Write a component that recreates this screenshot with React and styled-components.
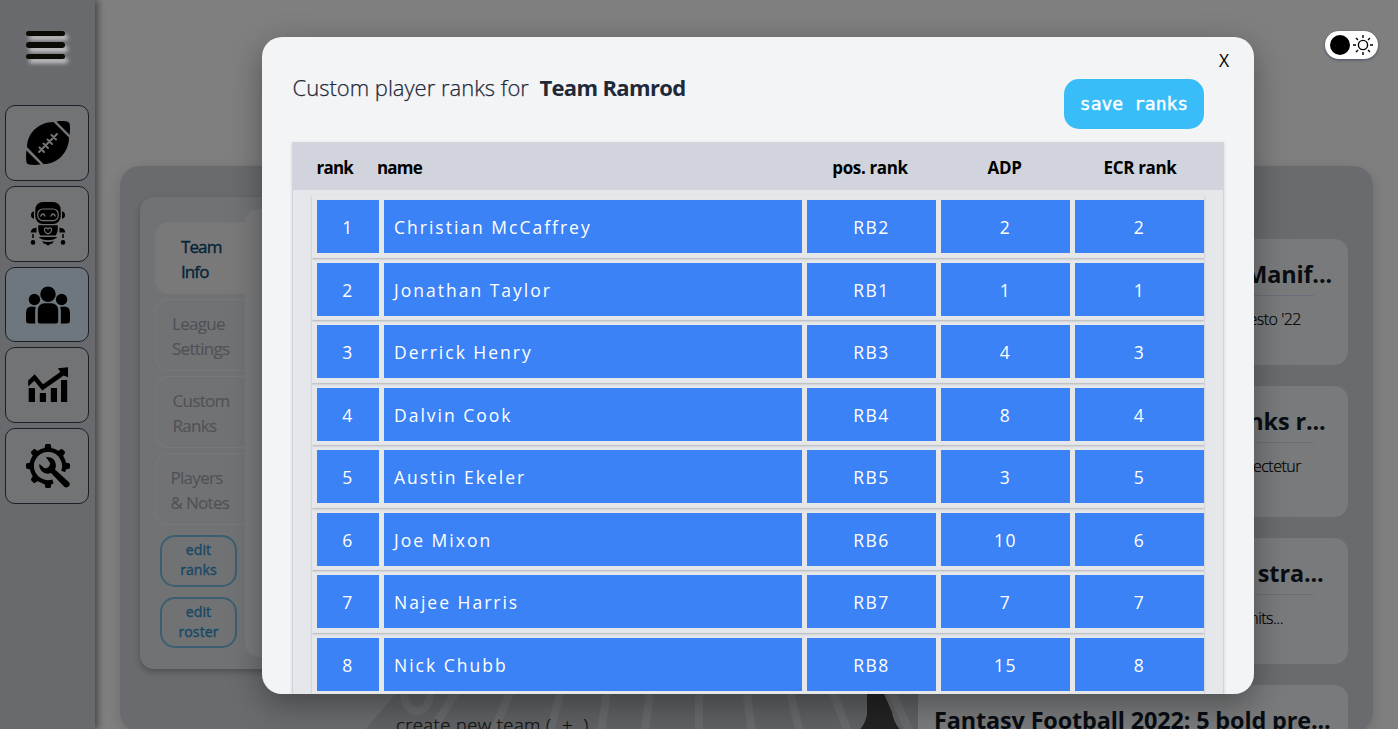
import React from "react";
import styled, { createGlobalStyle } from "styled-components";

const Global = createGlobalStyle`
  *, *::before, *::after { box-sizing: border-box; }
  html, body { margin: 0; height: 100%; overflow: hidden; }
  body { background: #fff; color: #000; font-family: "Open Sans", "Noto Sans", sans-serif; }
  button { font: inherit; color: inherit; margin: 0; padding: 0; border: 0; background: none; cursor: pointer; }
  h2, h3, p { margin: 0; font: inherit; }
`;

const Page = styled.div`
  position: relative;
  display: flex;
  width: 100%;
  height: 729px;
  overflow: hidden;
`;

const Sidebar = styled.nav`
  position: relative;
  flex: none;
  width: 95px;
  height: 100%;
  padding: 31px 6px 0 5px;
  background: #d3d5dc;
  box-shadow: 3px 0 7px rgba(0, 0, 0, 0.45);
`;

const MenuButton = styled.button`
  position: relative;
  z-index: 2;
  display: flex;
  flex-direction: column;
  gap: 6px;
  width: 38.5px;
  margin: 0 0 46.3px 21px;
`;

const MenuBar = styled.span`
  height: 5.3px;
  border-radius: 3px;
  background: #0b0a05;
  box-shadow: 3px 4px 4px rgba(255, 255, 255, 0.65);
`;

const NavList = styled.div`
  display: flex;
  flex-direction: column;
  gap: 5px;
`;

const NavButton = styled.button`
  display: flex;
  align-items: center;
  justify-content: center;
  height: 75.75px;
  border: 1px solid #363b50;
  border-radius: 10px;
  padding-left: 2px;
  background: ${(p) => (p.$active ? "#dceffd" : "#e5e6e8")};
`;

const Icon = styled.svg`
  display: block;
  width: 44px;
  height: 44px;
`;

const Main = styled.main`
  flex: 1;
  padding: 166px 25px 0 25px;
`;

const Board = styled.section`
  position: relative;
  display: flex;
  justify-content: space-between;
  height: 566px;
  padding: 31px 25px 0 20px;
  border-radius: 20px;
  background: #d4d6de;
  box-shadow: 0 4px 14px rgba(0, 0, 0, 0.16);
`;

const Field = styled.svg`
  position: absolute;
  left: 230px;
  top: 500px;
  width: 570px;
  height: 66px;
`;

const TeamColumn = styled.div`
  position: relative;
  width: 760px;
`;

const TeamCard = styled.div`
  display: flex;
  width: 740px;
  height: 471.5px;
  padding: 12px 12px 12px 15px;
  border-radius: 14px;
  background: #e3e5e8;
  box-shadow: 0 3px 6px rgba(0, 0, 0, 0.25);
`;

const TabColumn = styled.div`
  display: flex;
  flex-direction: column;
  flex: none;
  width: 90px;
  padding-top: 13px;
  gap: 5px;
`;

const Tab = styled.button`
  display: flex;
  align-items: center;
  height: 72px;
  padding-top: 1px;
  padding-left: ${(p) => p.$indent}px;
  border: 1px solid #f0f1f3;
  border-right: 0;
  border-radius: 14px 0 0 14px;
  background: ${(p) => (p.$active ? "#f2f3f5" : "transparent")};
  color: ${(p) => (p.$active ? "#0c4a6e" : "#a0a3ae")};
  font-size: 17px;
  font-weight: 400;
  -webkit-text-stroke: ${(p) => (p.$active ? 0.4 : 0.1)}px currentColor;
  line-height: 25px;
  letter-spacing: ${(p) => (p.$active ? -0.9 : -0.7)}px;
  text-align: left;
  white-space: pre;
`;

const EditButtons = styled.div`
  display: flex;
  flex-direction: column;
  gap: 10px;
  padding: 5px 8px 0 5px;
`;

const EditButton = styled.button`
  height: 51.5px;
  padding-bottom: 1px;
  border: 2px solid #75bee5;
  border-radius: 15px;
  color: #318fca;
  font-size: 14.2px;
  font-weight: 400;
  -webkit-text-stroke: 0.35px currentColor;
  line-height: 20px;
  white-space: pre;
`;

const TeamPanel = styled.div`
  flex: 1;
  border-radius: 14px;
  background: #f3f4f6;
`;

const NewTeam = styled.button`
  display: block;
  margin: 44.5px 0 0 256px;
  color: #1d1f24;
  font-size: 18.5px;
  font-weight: 300;
  -webkit-text-stroke: 0.25px currentColor;
  line-height: 24px;
  letter-spacing: 0.4px;
  white-space: pre;
`;

const NewsColumn = styled.div`
  position: relative;
  display: flex;
  flex-direction: column;
  gap: 21px;
  width: 430px;
  margin-top: 42px;
`;

const NewsCard = styled.article`
  flex: none;
  height: ${(p) => p.$height}px;
  padding: 16px;
  border-radius: 14px;
  background: #f3f4f6;
`;

const NewsTitle = styled.h3`
  margin-left: -8px;
  padding: 1px ${(p) => p.$inset}px 0 0;
  height: 36px;
  color: #111827;
  font-size: 23.4px;
  font-weight: 700;
  line-height: 36px;
  letter-spacing: -0.13px;
  text-align: right;
  white-space: nowrap;
`;

const NewsRule = styled.div`
  height: 1px;
  width: 380px;
  margin: 4px 0 10px 0;
  background: #d8d8f4;
`;

const NewsText = styled.p`
  padding-right: ${(p) => p.$inset}px;
  font-size: 16px;
  font-weight: 300;
  -webkit-text-stroke: 0.2px currentColor;
  line-height: 26px;
  letter-spacing: -0.5px;
  text-align: right;
  white-space: nowrap;
`;

const Overlay = styled.div`
  position: absolute;
  inset: 0;
  padding: 37px 144px 35px 262px;
  background: rgba(0, 0, 0, 0.5);
`;

const Modal = styled.section`
  position: relative;
  height: 657px;
  overflow: hidden;
  padding: 42px 30px 0 30px;
  border-radius: 20px;
  background: #f3f4f6;
`;

const ModalShadow = styled.div`
  border-radius: 20px;
  box-shadow: 0 10px 32px rgba(0, 0, 0, 0.35);
`;

const CloseButton = styled.button`
  position: absolute;
  top: 11px;
  right: 25px;
  font-size: 17.5px;
  line-height: 24px;
`;

const ModalHeader = styled.header`
  display: flex;
  justify-content: space-between;
  padding-right: 20px;
  height: 63px;
`;

const ModalTitle = styled.h2`
  display: flex;
  gap: 10.5px;
  margin-top: -10px;
  padding-left: 0.5px;
  color: #1f2937;
  font-size: 22px;
  font-weight: 300;
  -webkit-text-stroke: 0.25px currentColor;
  line-height: 36px;
  letter-spacing: 0;
`;

const TeamName = styled.span`
  font-weight: 700;
  -webkit-text-stroke: 0;
  letter-spacing: -0.65px;
`;

const SaveButton = styled.button`
  width: 140px;
  height: 50px;
  margin-top: 0.4px;
  border-radius: 15px;
  background: #38bdf8;
  color: #fff;
  font-family: "DejaVu Sans Mono", "Liberation Mono", monospace;
  font-size: 18px;
  line-height: 50px;
  -webkit-text-stroke: 0.4px #fff;
`;

const Table = styled.div`
  height: 620px;
  border: 1px solid #d1d4dc;
  background: #e5e7eb;
  box-shadow: 0 1px 3px rgba(0, 0, 0, 0.15);
`;

const TableHead = styled.div`
  display: grid;
  grid-template-columns: 60.5px 427.5px 131px 138px 133px;
  align-items: center;
  height: 47px;
  padding: 2px 0 0 23.5px;
  background: #d1d4dc;
  font-size: 17px;
  font-weight: 700;
`;

const HeadCell = styled.span`
  text-align: ${(p) => (p.$start ? "left" : "center")};
  letter-spacing: ${(p) => (p.$start ? -0.8 : -0.35)}px;
`;

const Rows = styled.div`
  padding: 5px 19px 0 19px;
`;

const Row = styled.div`
  display: grid;
  grid-template-columns: 62px 418px 129px 129px 129px;
  gap: 5px;
  height: 62.5px;
  padding: 5px 0 4.5px 5px;
  box-shadow: 0 1px 2px rgba(0, 0, 0, 0.22);
`;

const Cell = styled.div`
  display: flex;
  align-items: center;
  justify-content: ${(p) => (p.$start ? "flex-start" : "center")};
  padding: ${(p) => (p.$start ? "1px 0 0 10px" : "1px 0 0 0")};
  background: #3b82f6;
  color: #fff;
  font-size: 17.5px;
  letter-spacing: ${(p) => (p.$start ? 2 : 1.5)}px;
`;

const ThemeToggle = styled.button`
  position: absolute;
  top: 31px;
  right: 20px;
  display: flex;
  align-items: center;
  gap: 3px;
  width: 53px;
  height: 28px;
  padding-left: 5px;
  border-radius: 14px;
  background: #fff;
  box-shadow: 0 1px 3px #4b5068;
`;

const Knob = styled.span`
  width: 20px;
  height: 20px;
  border-radius: 50%;
  background: #000;
`;

const SunIcon = styled.svg`
  width: 20px;
  height: 20px;
`;

const FootballIcon = () => (
  <Icon viewBox="0 0 44 44">
    <path d="M1 26C1 12 13 1 27.5 1L43 16.4C43 31.5 31 43 17.5 43Z" />
    <path d="M30.5 .4C35 -.2 39 0 41 .5Q43.3 1 43.7 3C44.2 7 44 10 43.6 13.8Z" />
    <path d="M.4 29.5L14.5 43.6C10 44.2 6 44 3 43.6Q.8 43 .4 41C-.1 37 0 33 .4 29.5Z" />
    <g stroke="#e5e6e8" strokeWidth="2" strokeLinecap="round">
      <path d="M13 31L31 13M13.5 26.5l4.5 4.5M17.5 22.5l4.5 4.5M21.5 18.5l4.5 4.5M25.5 14l4.5 4.5" />
    </g>
  </Icon>
);

const RobotIcon = () => (
  <Icon viewBox="0 0 44 44">
    <rect x="9.3" y="0" width="25.4" height="22" rx="7.5" />
    <rect x="11.8" y="7" width="20.4" height="11.6" rx="5" fill="none" stroke="#e5e6e8" strokeWidth="1.2" />
    <path d="M14.8 14q2-4 4.2 0M25 14q2-4 4.2 0" fill="none" stroke="#e5e6e8" strokeWidth="1.4" strokeLinecap="round" />
    <path d="M8 9.500v7.200q-3-.4-3-3.600t3-3.600zM36 9.500v7.200q3-.4 3-3.600t-3-3.600z" />
    <path d="M12.300 23.200h19.400q.6 7-2.200 10.200h-15q-2.800-3.200-2.200-10.200z" />
    <path d="M18.300 28c0-3 3-2.500 3.700-1 .7-1.500 3.700-2 3.700 1q-.5 2.500-3.700 4-3.200-1.500-3.700-4z" fill="none" stroke="#e5e6e8" strokeWidth="1.2" />
    <path d="M4.700 30.500q.3-4.700 5.800-4.700v4.700zM39.300 30.500q-.3-4.700-5.800-4.700v4.700z" />
    <path d="M7 32v4M37 32v4" stroke="#000" strokeWidth="1.5" />
    <circle cx="7" cy="40.400" r="2.300" /><circle cx="37" cy="40.400" r="2.300" />
    <path d="M12.800 35h18.400q-3 3.300-9.200 3.300t-9.200-3.300zM16 39.300q6 1.200 12 0l-2 2.500h-1.500q-2.500 3.400-5 0H18z" />
  </Icon>
);

const TeamIcon = () => (
  <Icon viewBox="0 0 44 44">
    <circle cx="22" cy="11.300" r="7.700" />
    <circle cx="8.400" cy="16.500" r="5.700" />
    <circle cx="35.600" cy="16.500" r="5.700" />
    <path d="M11.800 28q0-7.700 7.200-7.700h6q7.200 0 7.200 7.700v10.200q0 2.200-2.200 2.200H14q-2.200 0-2.200-2.200z" />
    <path d="M9.200 40.400H3q-3 0-3-3V30q0-6.400 6-6.400 2.500 0 4 .8-.9 1.600-.9 4zM34.800 40.400H41q3 0 3-3V30q0-6.400-6-6.400-2.500 0-4 .8.900 1.600.9 4z" />
  </Icon>
);

const ChartIcon = () => (
  <Icon viewBox="0 0 44 44">
    <path d="M2.700 25H9v14H2.700zM13.800 30H20v9h-6.200zM24.800 25H31v14h-6.200zM35 17h6.200v22H35z" />
    <path d="M2.200 17.500L8.700 11.300 17 21.300 34.300 9.100 32 5.200 42 4.300V14.200L37.700 12.600 16.300 27.400 8.300 17.800 2.200 23.400Z" />
  </Icon>
);

const SettingsIcon = () => (
  <Icon viewBox="0 0 44 44">
    <path d="M37.200 27.500A16.200 16.200 0 1 0 27 37.400" fill="none" stroke="#000" strokeWidth="4.200" />
    {[90, 135, 180, 225, 270, 315, 0].map((a) => (
      <path key={a} d="M37.500 18L43 19.200Q44 19.400 44 20.400v3.200Q44 24.600 43 24.800L37.500 26z" transform={`rotate(${a} 22 22)`} />
    ))}
    <path d="M20 13q8.500-.5 9.700 7 .5 3-.7 5.500L42.800 38q2 2.400-.3 4.500t-4.500 0L25 29q-5.500 2-9.500-2-3-3.200-2-7l5 4.300q2.500.3 4-1.300 1.700-1.700 1.500-4z" />
  </Icon>
);

const NAV = [
  { id: "football", icon: FootballIcon },
  { id: "robot", icon: RobotIcon },
  { id: "teams", icon: TeamIcon, active: true },
  { id: "stats", icon: ChartIcon },
  { id: "settings", icon: SettingsIcon },
];

const TABS = [
  { label: "Team\nInfo", indent: 25, active: true },
  { label: "League\nSettings", indent: 16 },
  { label: "Custom\nRanks", indent: 16.5 },
  { label: "Players\n& Notes", indent: 14.5 },
];

const NEWS = [
  { title: "Football Manif...", text: "Draft Day Manifesto '22", height: 126, ti: 0, xi: 31 },
  { title: "Player ranks r...", text: "Lorem consectetur", height: 131, ti: 6.5, xi: 31 },
  { title: "Draft stra...", text: "Waiver limits...", height: 126, ti: 8.5, xi: 49 },
  { title: "Fantasy Football 2022: 5 bold pre...", text: "", height: 126, ti: 1.5, xi: 31 },
];

const PLAYERS = [
  ["Christian McCaffrey", "RB2", 2, 2],
  ["Jonathan Taylor", "RB1", 1, 1],
  ["Derrick Henry", "RB3", 4, 3],
  ["Dalvin Cook", "RB4", 8, 4],
  ["Austin Ekeler", "RB5", 3, 5],
  ["Joe Mixon", "RB6", 10, 6],
  ["Najee Harris", "RB7", 7, 7],
  ["Nick Chubb", "RB8", 15, 8],
];

const FieldArt = () => (
  <Field viewBox="350 666 570 66">
    <path d="M420 666H918V732H363Z" fill="#bfc1c7" />
    <g stroke="#d0d2d8" strokeWidth="8" fill="none">
      <path d="M472 666L431 732M522 666L493 732M567 666L550 732M611 666L601 732M653 666L645 732M699 666V732M743 666L752 732M783 666L800 732M823 666L848 732M880 666L910 732" />
      <ellipse cx="417" cy="694" rx="13" ry="17" />
    </g>
    <path d="M867 666V714Q866 723 858 732H902Q893 722 892 712L884 694V666Z" fill="#464646" />
  </Field>
);

export default function App() {
  return (
    <>
      <Global />
      <Page>
        <Sidebar>
          <MenuButton aria-label="menu"><MenuBar /><MenuBar /><MenuBar /></MenuButton>
          <NavList>
            {NAV.map(({ id, icon: Glyph, active }) => (
              <NavButton key={id} aria-label={id} $active={active}><Glyph /></NavButton>
            ))}
          </NavList>
        </Sidebar>
        <Main>
          <Board>
            <FieldArt />
            <TeamColumn>
              <TeamCard>
                <TabColumn>
                  {TABS.map((t) => (
                    <Tab key={t.label} $active={t.active} $indent={t.indent}>{t.label}</Tab>
                  ))}
                  <EditButtons>
                    <EditButton>{"edit\nranks"}</EditButton>
                    <EditButton>{"edit\nroster"}</EditButton>
                  </EditButtons>
                </TabColumn>
                <TeamPanel />
              </TeamCard>
              <NewTeam>{"create new team (  +  )"}</NewTeam>
            </TeamColumn>
            <NewsColumn>
              {NEWS.map((n) => (
                <NewsCard key={n.title} $height={n.height}>
                  <NewsTitle $inset={n.ti}>{n.title}</NewsTitle>
                  <NewsRule />
                  <NewsText $inset={n.xi}>{n.text}</NewsText>
                </NewsCard>
              ))}
            </NewsColumn>
          </Board>
        </Main>
        <Overlay>
          <ModalShadow>
            <Modal>
              <CloseButton>X</CloseButton>
              <ModalHeader>
                <ModalTitle>Custom player ranks for <TeamName>Team Ramrod</TeamName></ModalTitle>
                <SaveButton>save ranks</SaveButton>
              </ModalHeader>
              <Table>
                <TableHead>
                  <HeadCell $start>rank</HeadCell>
                  <HeadCell $start>name</HeadCell>
                  <HeadCell>pos. rank</HeadCell>
                  <HeadCell>ADP</HeadCell>
                  <HeadCell>ECR rank</HeadCell>
                </TableHead>
                <Rows>
                  {PLAYERS.map(([name, pos, adp, ecr], i) => (
                    <Row key={name}>
                      <Cell>{i + 1}</Cell>
                      <Cell $start>{name}</Cell>
                      <Cell>{pos}</Cell>
                      <Cell>{adp}</Cell>
                      <Cell>{ecr}</Cell>
                    </Row>
                  ))}
                </Rows>
              </Table>
            </Modal>
          </ModalShadow>
        </Overlay>
        <ThemeToggle aria-label="theme">
          <Knob />
          <SunIcon viewBox="0 0 20 20" fill="none" stroke="#000" strokeWidth="1.400">
            <circle cx="10" cy="10" r="4.600" />
            <path d="M10 0v3M10 17v3M0 10h3M17 10h3M3 3l2 2M15 15l2 2M17 3l-2 2M5 15l-2 2" />
          </SunIcon>
        </ThemeToggle>
      </Page>
    </>
  );
}
